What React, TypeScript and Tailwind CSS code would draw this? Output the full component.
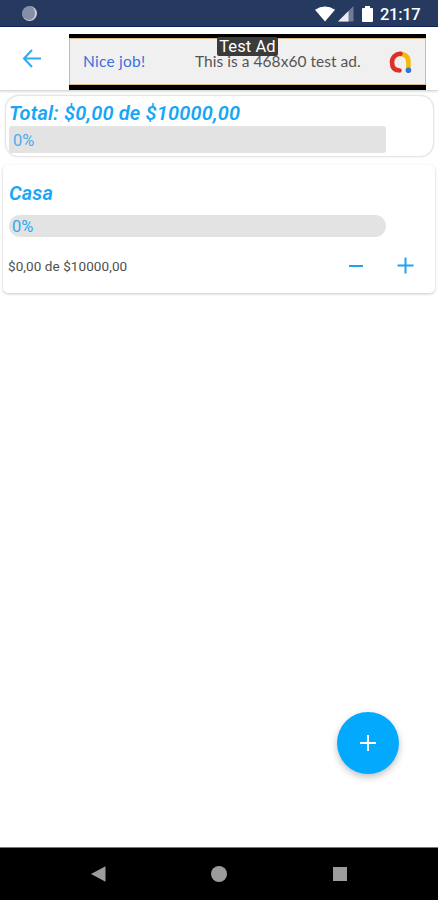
function StatusBar() {
  return (
    <div className="flex h-[27px] shrink-0 items-center border-b border-[#10205a] bg-[#263a60] pt-px pr-[17px] pl-[22px]">
      <span className="h-[15px] w-[15px] rounded-full border-r-2 border-b border-[#c9ced8] bg-[#8590a8]" />
      <svg className="ml-auto" width="20" height="16" viewBox="0 0 20 16">
        <path d="M0 3.7Q10-2.7 20 3.7L10 15.5Z" fill="#fff" />
      </svg>
      <svg className="ml-[3px]" width="16" height="16" viewBox="0 0 16 16">
        <path d="M15.5 0V15.5H0Z" fill="#6f7c96" />
        <path d="M10.5 5V15.5H0Z" fill="#e9ecf1" />
      </svg>
      <svg className="ml-[8px]" width="11" height="16" viewBox="0 0 11 16">
        <path d="M3 0h5v2h2q1 0 1 1v12q0 1-1 1H1q-1 0-1-1V3q0-1 1-1h2Z" fill="#fff" />
      </svg>
      <span className="mt-[3px] ml-[7px] w-[41px] text-[16.5px] leading-none font-medium tracking-[-0.3px] text-white">
        21:17
      </span>
    </div>
  );
}

function AdBanner() {
  return (
    <div className="relative h-[56px] w-[357px] border-t-4 border-b-[5px] border-black">
      <div className="flex h-full items-center border border-[#d9b98c] bg-[#f0f0f0] pr-[13px] pl-[13px] font-['Lato',sans-serif] text-[15.5px] leading-none whitespace-nowrap">
        <span className="w-[112px] tracking-[0.25px] text-[#3c70dc]">Nice job!</span>
        <span className="tracking-[0.04px] text-[#555]">This is a 468x60 test ad.</span>
        <svg className="ml-auto" width="24" height="24" viewBox="0 0 24 24" fill="none">
          <path d="M11 3.7Q20.4 3.7 20.4 12V20" stroke="#f6b80c" strokeWidth="4.6" />
          <path d="M12.5 3.7A8.3 8.3 0 0 0 4 12Q4 20.5 11.5 20.5" stroke="#df3028" strokeWidth="4.6" strokeLinecap="round" />
          <circle cx="20.4" cy="20.3" r="2.8" fill="#2d76dc" />
        </svg>
      </div>
      <span className="absolute top-[-1px] left-[148px] flex h-[19px] w-[61px] items-center justify-center rounded-[2px] bg-[#3b3b3b] pt-[2px] text-[16.5px] leading-none tracking-[0.1px] whitespace-nowrap text-white">
        Test Ad
      </span>
    </div>
  );
}

function Header() {
  return (
    <header className="flex h-[64px] shrink-0 border-b border-[#dadada] bg-white pt-[7px] shadow-[0_1px_2px_rgba(0,0,0,0.12)]">
      <div className="w-[69px] pt-[15px] pl-[22px]">
        <svg width="20" height="19" viewBox="0 0 20 19" fill="none" stroke="#32a8ee" strokeWidth="2">
          <path d="M10 1L2 9.5L10 18M2 9.5H19" />
        </svg>
      </div>
      <AdBanner />
    </header>
  );
}

export default function App() {
  return (
    <div className="relative flex h-[900px] w-[438px] flex-col overflow-hidden bg-white font-['Roboto',sans-serif]">
      <StatusBar />
      <Header />
      <main className="flex-1">
        <section className="mt-[4px] mr-[4px] ml-[5px] h-[62px] rounded-[14px] border border-[#e6e6e6] bg-white pt-[6px] pl-[3px] shadow-[0_0_2px_rgba(0,0,0,0.14)]">
          <h1 className="h-[24px] text-[20px] leading-[23px] font-semibold tracking-[0.18px] whitespace-nowrap text-[#18a6f5] italic">
            Total: $0,00 de $10000,00
          </h1>
          <div className="flex h-[27px] w-[377px] items-center rounded-[3px] bg-[#e3e3e3] pt-[3px] pl-[4px] text-[16.5px] leading-none text-[#4baee9]">
            0%
          </div>
        </section>
        <section className="mx-[3px] mt-[8px] h-[128px] rounded-[5px] bg-white px-[6px] pt-[17px] shadow-[0_1px_3px_rgba(0,0,0,0.22)]">
          <h2 className="h-[24px] text-[20px] leading-[23px] font-semibold tracking-[0.1px] text-[#18a6f5] italic">Casa</h2>
          <div className="mt-[9px] flex h-[22px] w-[377px] items-center rounded-full bg-[#e3e3e3] pt-[2px] pl-[3px] text-[16.5px] leading-none text-[#35a9ee]">
            0%
          </div>
          <div className="mt-[19px] flex h-[18px] items-center">
            <span className="-ml-px pt-[3px] text-[13.5px] leading-none tracking-[0.08px] text-[#505050]">$0,00 de $10000,00</span>
            <svg className="mt-[2px] ml-auto" width="16" height="16" viewBox="0 0 16 16" stroke="#1aa6ee" strokeWidth="2">
              <path d="M1 8H15" />
            </svg>
            <svg className="mr-[15px] ml-[33px]" width="17" height="17" viewBox="0 0 17 17" stroke="#1aa6ee" strokeWidth="2">
              <path d="M.5 8.5H16.5M8.5 .5V16.5" />
            </svg>
          </div>
        </section>
      </main>
      <button className="absolute top-[712px] left-[337px] flex h-[62px] w-[62px] items-center justify-center rounded-full bg-[#03a9fc] shadow-[0_3px_7px_rgba(0,0,0,0.25)]">
        <svg width="16" height="16" viewBox="0 0 16 16" stroke="#fff" strokeWidth="2">
          <path d="M0 8H16M8 0V16" />
        </svg>
      </button>
      <nav className="flex h-[53px] shrink-0 border-t border-[#777] bg-black pt-[18px] pl-[91px]">
        <svg width="15" height="16" viewBox="0 0 15 16">
          <path d="M0 8L14.5 .3V15.7Z" fill="#9c9c9c" />
        </svg>
        <span className="ml-[105px] h-[16px] w-[16px] rounded-full bg-[#9c9c9c]" />
        <span className="mt-px ml-[106px] h-[14px] w-[14px] bg-[#9c9c9c]" />
      </nav>
    </div>
  );
}
